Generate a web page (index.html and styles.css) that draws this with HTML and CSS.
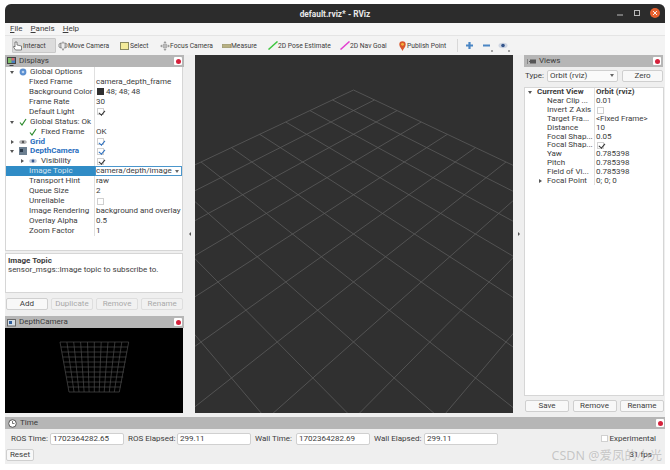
FILE: index.html
```html
<!DOCTYPE html>
<html lang="en">
<head>
<meta charset="utf-8">
<title>default.rviz* - RViz</title>
<link rel="stylesheet" href="styles.css">
</head>
<body>
<div class="window">
  <header class="titlebar">
    <span class="title">default.rviz* - RViz</span>
    <div class="wm">
      <svg width="8" height="8" viewBox="0 0 8 8"><path d="M1 6h6" stroke="#bbb"/></svg>
      <svg width="8" height="8" viewBox="0 0 8 8"><rect x="1.5" y="1.5" width="5" height="5" fill="none" stroke="#bbb"/></svg>
      <span class="close"><svg width="6" height="6" viewBox="0 0 6 6"><path d="M1 1l4 4M5 1l-4 4" stroke="#fff" stroke-width=".9"/></svg></span>
    </div>
  </header>
  <nav class="menubar"><span><u>F</u>ile</span><span><u>P</u>anels</span><span><u>H</u>elp</span></nav>
  <div class="toolbar">
    <div class="tool pressed"><svg width="10" height="10" viewBox="0 0 10 10"><path d="M2 1v5L1 5 .5 6l2 3h6V5L4 4V1z" fill="#fff" stroke="#555" stroke-width=".7"/></svg>Interact</div>
    <div class="tool w-move"><svg width="10" height="10" viewBox="0 0 10 10"><path d="M5 .5v9M1 3v3l2 1V2zM9 3v3L7 7V2z" fill="none" stroke="#777" stroke-width=".8"/><path d="M3 2h4v4l-2 3-2-3z" fill="#eee" stroke="#777" stroke-width=".6"/></svg>Move Camera</div>
    <div class="tool w-select"><svg width="9" height="8" viewBox="0 0 9 8"><rect x=".5" y=".5" width="8" height="7" fill="#f3eb9a" stroke="#8a8a60"/></svg>Select</div>
    <div class="tool w-focus"><svg width="10" height="10" viewBox="0 0 10 10"><path d="M5 0l1.5 2h-3zM5 10l1.500-2h-3zM0 5l2-1.500v3zM10 5l-2-1.500v3z" fill="#999"/><circle cx="5" cy="5" r="2.300" fill="#bbb" stroke="#888" stroke-width=".5"/></svg>Focus Camera</div>
    <div class="tool w-measure"><svg width="9" height="4" viewBox="0 0 9 4"><rect width="9" height="4" fill="#b8b184" stroke="#8a8a70" stroke-width=".6"/></svg>Measure</div>
    <div class="tool w-pose"><svg width="10" height="9" viewBox="0 0 10 9"><path d="M.5 8.500L9.500.5" stroke="#3fc63f" stroke-width="1.500"/></svg>2D Pose Estimate</div>
    <div class="tool w-nav"><svg width="10" height="9" viewBox="0 0 10 9"><path d="M.5 8.500L9.500.5" stroke="#e23fd0" stroke-width="1.500"/></svg>2D Nav Goal</div>
    <div class="tool w-point"><svg width="7" height="10" viewBox="0 0 7 10"><path d="M3.500 10C2.500 7.500.3 5.800.3 3.400a3.200 3.200 0 0 1 6.400 0C6.700 5.800 4.500 7.500 3.500 10z" fill="#d9562b"/><circle cx="3.500" cy="3.300" r="1.400" fill="#f4b23c"/></svg>Publish Point</div>
    <i class="sep"></i>
    <svg class="act" width="9" height="9" viewBox="0 0 9 9"><path d="M4.500 1v7M1 4.500h7" stroke="#4a86c4" stroke-width="2.200"/></svg>
    <svg class="act act-minus" width="11" height="11" viewBox="0 0 11 11"><path d="M1 4.500h7" stroke="#4a86c4" stroke-width="2"/><path d="M9 10h2" stroke="#555"/></svg>
    <svg class="act act-eye" width="12" height="11" viewBox="0 0 12 11"><ellipse cx="5" cy="4.500" rx="4.500" ry="2.800" fill="#cfd6e2"/><circle cx="5" cy="4.500" r="1.800" fill="#34558c"/><path d="M10 10h2" stroke="#555"/></svg>
  </div>

  <main class="workspace">
    <aside class="left">
      <section class="dock displays">
        <div class="dock-title"><svg width="9" height="9" viewBox="0 0 9 9"><rect x=".5" y=".5" width="8" height="6" fill="#4a7fc0" stroke="#444"/><rect x="1" y="1" width="3.500" height="5" fill="#7fc06a"/><rect x="4.500" y="1" width="3" height="2.500" fill="#d86a6a"/><path d="M2.500 8.500h4" stroke="#444"/></svg><span>Displays</span><b class="x"></b></div>
        <div class="tree">
          <div class="row"><div class="name d0"><i class="tw open"></i><svg class="ic" width="8" height="8" viewBox="0 0 8 8"><circle cx="4" cy="4" r="3.400" fill="#5b8fd0"/><circle cx="4" cy="4" r="1.300" fill="#bcd3ee"/></svg>Global Options</div><div class="val"></div></div>
          <div class="row"><div class="name d1">Fixed Frame</div><div class="val">camera_depth_frame</div></div>
          <div class="row"><div class="name d1">Background Color</div><div class="val"><i class="swatch"></i>48; 48; 48</div></div>
          <div class="row"><div class="name d1">Frame Rate</div><div class="val">30</div></div>
          <div class="row"><div class="name d1">Default Light</div><div class="val"><i class="cb on"></i></div></div>
          <div class="row"><div class="name d0"><i class="tw open"></i><svg class="ic" width="8" height="8" viewBox="0 0 8 8"><path d="M1 4.500L3 7l4-6" fill="none" stroke="#2d8a2d" stroke-width="1.200"/></svg>Global Status: Ok</div><div class="val"></div></div>
          <div class="row"><div class="name d1b"><svg class="ic" width="8" height="8" viewBox="0 0 8 8"><path d="M1 4.500L3 7l4-6" fill="none" stroke="#2d8a2d" stroke-width="1.200"/></svg>Fixed Frame</div><div class="val">OK</div></div>
          <div class="row"><div class="name d0 link"><i class="tw"></i><svg class="ic" width="8" height="8" viewBox="0 0 8 8"><ellipse cx="4" cy="4" rx="3.800" ry="2" fill="#b5b5b5"/><circle cx="4" cy="4" r="1.200" fill="#555"/></svg>Grid</div><div class="val"><i class="cb on blue"></i></div></div>
          <div class="row"><div class="name d0 link"><i class="tw open"></i><svg class="ic" width="8" height="8" viewBox="0 0 8 8"><rect width="8" height="8" fill="#6c7f90"/><rect x="1" y="2" width="3" height="3" fill="#2b3a4a"/></svg>DepthCamera</div><div class="val"><i class="cb on blue"></i></div></div>
          <div class="row"><div class="name d1c"><i class="tw"></i><svg class="ic" width="8" height="8" viewBox="0 0 8 8"><ellipse cx="4" cy="4" rx="3.800" ry="2.200" fill="#c5cede"/><circle cx="4" cy="4" r="1.400" fill="#34558c"/></svg>Visibility</div><div class="val"><i class="cb on"></i></div></div>
          <div class="row sel"><div class="name d1">Image Topic</div><div class="val combo">camera/depth/image<i class="arrow boxed"></i></div></div>
          <div class="row"><div class="name d1">Transport Hint</div><div class="val">raw</div></div>
          <div class="row"><div class="name d1">Queue Size</div><div class="val">2</div></div>
          <div class="row"><div class="name d1">Unreliable</div><div class="val"><i class="cb"></i></div></div>
          <div class="row"><div class="name d1">Image Rendering</div><div class="val">background and overlay</div></div>
          <div class="row"><div class="name d1">Overlay Alpha</div><div class="val">0.5</div></div>
          <div class="row"><div class="name d1">Zoom Factor</div><div class="val">1</div></div>
        </div>
        <div class="desc"><strong>Image Topic</strong><br>sensor_msgs::Image topic to subscribe to.</div>
        <div class="btns"><button>Add</button><button disabled>Duplicate</button><button disabled>Remove</button><button disabled>Rename</button></div>
      </section>
      <section class="dock camera">
        <div class="dock-title"><svg width="9" height="9" viewBox="0 0 9 9"><rect x=".5" y="1.500" width="8" height="6.500" fill="#d5dde5" stroke="#666"/><rect x="2" y="3" width="3" height="3" fill="#2f5d9a"/></svg><span>DepthCamera</span><b class="x"></b></div>
        <div class="cam-view">
          <svg width="178" height="86" viewBox="5 327 178 86">
            <g stroke="#4c4c4c" stroke-width=".7" fill="none">
              <path d="M60 341H128.700M60.900 346H127.900M61.800 351H127.200M62.700 356H126.400M63.600 361H125.700M64.500 366H124.800M65.400 371H124M66.300 376H123.200M67.200 381H122.100M68.100 386H120.700M69 391H119.300"/>
              <path d="M60 341L69 391M66.900 341L74 391M73.700 341L79 391M80.600 341L84.100 391M87.500 341L89.100 391M94.300 341V391M101.200 341L99.200 391M108 341L104.200 391M114.900 341L109.300 391M121.800 341L114.300 391M128.700 341L119.300 391"/>
            </g>
          </svg>
        </div>
      </section>
    </aside>
    <div class="handle"><i class="tri-l"></i></div>
    <section class="viewport">
      <svg width="318" height="358" viewBox="195 55 318 358">
        <g stroke="#5c5c5c" stroke-width=".8" fill="none">
          <path d="M353.500 90L48.500 234M374.530 99.930L64.600 256.700M397.060 110.570L82.430 282M421.270 122L102.400 310.200M447.330 134.310L124.800 342M475.480 147.600L150.200 378M505.980 162L179.240 419.140M539.100 177.650L212.750 466.600M575.300 194.700L251.850 522M614.900 213.400L298.050 587.500M658.450 234L353.500 666"/>
          <path d="M353.500 90L658.500 234M332.470 99.930L642.400 256.700M309.940 110.570L624.570 282M285.730 122L604.600 310.200M259.670 134.310L582.200 342M231.520 147.600L556.800 378M201.020 162L527.760 419.140M167.900 177.650L494.250 466.600M131.700 194.700L455.150 522M92.100 213.400L408.950 587.500M48.550 234L353.500 666"/>
        </g>
      </svg>
    </section>
    <div class="handle"><i class="tri-r"></i></div>
    <aside class="dock views">
      <div class="dock-title"><svg width="9" height="5" viewBox="0 0 9 5"><path d="M0 0v5M2 2.500h1" stroke="#555"/><rect x="3" y=".5" width="6" height="4" fill="#555"/></svg><span>Views</span><b class="x"></b></div>
      <div class="type-row"><span>Type:</span><div class="select">Orbit (rviz)<i class="arrow"></i></div><button>Zero</button></div>
      <div class="tree vtree">
        <div class="row"><div class="name v0 strong"><i class="tw open"></i>Current View</div><div class="val strong">Orbit (rviz)</div></div>
        <div class="row"><div class="name v1">Near Clip ...</div><div class="val">0.01</div></div>
        <div class="row"><div class="name v1">Invert Z Axis</div><div class="val"><i class="cb"></i></div></div>
        <div class="row"><div class="name v1">Target Fra...</div><div class="val">&lt;Fixed Frame&gt;</div></div>
        <div class="row"><div class="name v1">Distance</div><div class="val">10</div></div>
        <div class="row"><div class="name v1">Focal Shap...</div><div class="val">0.05</div></div>
        <div class="row"><div class="name v1">Focal Shap...</div><div class="val"><i class="cb on"></i></div></div>
        <div class="row"><div class="name v1">Yaw</div><div class="val">0.785398</div></div>
        <div class="row"><div class="name v1">Pitch</div><div class="val">0.785398</div></div>
        <div class="row"><div class="name v1">Field of Vi...</div><div class="val">0.785398</div></div>
        <div class="row"><div class="name v2"><i class="tw"></i>Focal Point</div><div class="val">0; 0; 0</div></div>
      </div>
      <div class="btns view-btns"><button>Save</button><button>Remove</button><button>Rename</button></div>
    </aside>
  </main>

  <section class="time">
    <div class="dock-title"><svg width="9" height="9" viewBox="0 0 9 9"><circle cx="4.500" cy="4.500" r="3.800" fill="#fff" stroke="#555"/><path d="M4.500 2v2.500h2" fill="none" stroke="#555" stroke-width=".8"/></svg><span>Time</span><b class="x"></b></div>
    <div class="time-row">
      <label class="l1">ROS Time:</label><div class="field">1702364282.65</div>
      <label class="l2">ROS Elapsed:</label><div class="field">299.11</div>
      <label class="l3">Wall Time:</label><div class="field">1702364282.69</div>
      <label class="l4">Wall Elapsed:</label><div class="field">299.11</div>
      <div class="exp"><i class="cb"></i>Experimental</div>
    </div>
    <div class="status-row"><button>Reset</button><span class="fps">31 fps</span></div>
  </section>
</div>
<div class="watermark">CSDN @爱凤的小光</div>
</body>
</html>
```
FILE: styles.css
```css
* { box-sizing: border-box; }
html, body { margin: 0; height: 100%; background: #fff; overflow: hidden; }
body { position: relative; font: 8px/10px Roboto, "Noto Sans", sans-serif; color: #3c3c3c; }
.window { margin: 4px 5px 0; width: 660px; height: 460px; display: flex; flex-direction: column; background: #efefef; border-radius: 6px 6px 0 0; overflow: hidden; }

.titlebar { height: 19px; flex: none; background: #2c2c2c; display: flex; align-items: center; justify-content: center; position: relative; }
.title { color: #e8e8e8; font-weight: 700; font-size: 8.300px; }
.wm { position: absolute; right: 5px; top: 4px; display: flex; align-items: center; gap: 9px; }
.close { width: 10px; height: 10px; border-radius: 50%; background: #e9622f; display: flex; align-items: center; justify-content: center; }

.menubar { height: 12px; flex: none; background: #f6f6f6; display: flex; gap: 8px; padding-left: 5px; align-items: center; font-size: 8px; }
.toolbar { height: 20px; flex: none; background: #f3f3f3; border-top: 1px solid #e4e4e4; display: flex; align-items: center; padding-left: 7px; font-size: 6.700px; }
.tool { display: flex; align-items: center; height: 15px; white-space: nowrap; flex: none; }
.tool svg { flex: none; }
.pressed { width: 44px; background: #dcdcdc; border: 1px solid #c8c8c8; border-radius: 1px; }
.w-move { margin-left: 2px; width: 62px; }
.w-select { width: 40px; gap: 1px; }
.w-focus { width: 62px; }
.w-measure { width: 46px; }
.w-pose { width: 72px; }
.w-nav { width: 59px; }
.w-point { width: 58px; gap: 1px; }
.sep { width: 1px; height: 13px; background: #d8d8d8; flex: none; }
.act { flex: none; margin-left: 7px; }
.act-minus { margin-left: 8px; margin-top: 2px; }
.act-eye { margin-left: 5px; margin-top: 2px; }

.workspace { flex: 1; min-height: 0; display: flex; }
.left { width: 179px; flex: none; height: 358px; display: flex; flex-direction: column; gap: 6px; }
.dock { display: flex; flex-direction: column; min-height: 0; }
.dock-title { height: 12px; flex: none; background: #b6b6b6; display: flex; align-items: center; gap: 3px; padding-left: 2px; font-size: 8px; }
.dock-title span { flex: 1; }
.x { width: 8px; height: 8px; background: #fff; margin-right: 2px; position: relative; flex: none; border-radius: 1px; }
.x::after { content: ""; position: absolute; left: 1.500px; top: 1.500px; width: 5px; height: 5px; border-radius: 50%; background: #d5223c; }

.displays { height: 255px; flex: none; }
.tree { background: #fff; border: 1px solid #d6d6d6; border-top: 0; height: 184px; flex: none; overflow: hidden; width: 178px; }
.row { height: 9.940px; display: flex; align-items: center; white-space: nowrap; }
.name { width: 89px; flex: none; height: 100%; display: flex; align-items: center; border-right: 1px solid #e0e0e0; overflow: hidden; }
.val { flex: 1; min-width: 0; padding-left: 1px; display: flex; align-items: center; height: 100%; }
.d0 { padding-left: 3px; }
.d1 { padding-left: 23px; }
.d1b { padding-left: 23px; }
.d1c { padding-left: 13px; }
.link { color: #2a6fc0; font-weight: 700; }
.tw { width: 10px; height: 8px; flex: none; position: relative; }
.tw::after { content: ""; position: absolute; left: 2px; top: 2px; border-left: 3px solid #555; border-top: 2px solid transparent; border-bottom: 2px solid transparent; }
.tw.open::after { left: 1px; top: 3px; border-top: 3px solid #555; border-left: 2px solid transparent; border-right: 2px solid transparent; border-bottom: 0; }
.ic { margin-right: 4px; flex: none; }
.name.d0 .ic { margin-left: 0; margin-right: 3px; }
.cb { width: 7px; height: 7px; background: #fff; border: 1px solid #d0d0d0; display: block; position: relative; flex: none; margin-left: 1px; }
.cb.on::after { content: ""; position: absolute; left: 1.500px; top: -.5px; width: 2.500px; height: 5px; border: solid #333; border-width: 0 1px 1px 0; transform: rotate(40deg); }
.cb.blue::after { border-color: #2a6fc0; }
.swatch { width: 7px; height: 7px; background: #303030; margin: 0 2px 0 1px; flex: none; }
.sel { background: #308cc6; }
.sel .name { border-right: 0; color: #d5e3ee; }
.combo { background: #fff; border: 1px solid #4a96cc; justify-content: space-between; padding: 0; }
.arrow { width: 0; height: 0; border-top: 3px solid #666; border-left: 2px solid transparent; border-right: 2px solid transparent; margin-right: 3px; flex: none; }
.arrow.boxed { margin-right: 2px; }

.desc { height: 40px; flex: none; margin-top: 2px; background: #fff; border: 1px solid #d6d6d6; padding: 2px 2px; line-height: 9px; width: 178px; }
.btns { display: flex; gap: 3.500px; padding: 5px 0 0 1px; height: 17px; flex: none; width: 178px; }
button { font: inherit; color: inherit; height: 12px; padding: 0; background: #f8f8f8; border: 1px solid #cfcfcf; border-radius: 2px; flex: 1; }
button:disabled { color: #a9a9a9; background: #f1f1f1; border-color: #dedede; }

.camera { flex: 1; }
.cam-view { flex: 1; background: #000; min-height: 0; overflow: hidden; width: 178px; }
.cam-view svg { display: block; }

.handle { flex: none; width: 11px; height: 358px; display: flex; align-items: center; justify-content: center; }
.tri-l { border-right: 2px solid #555; border-top: 2px solid transparent; border-bottom: 2px solid transparent; }
.tri-r { border-left: 2px solid #555; border-top: 2px solid transparent; border-bottom: 2px solid transparent; }
.viewport { width: 318px; flex: none; height: 358px; background: #303030; }
.viewport svg { display: block; }

.views { width: 140px; flex: none; height: 358px; }
.views .dock-title { width: 139px; padding-left: 3px; }
.type-row { height: 20px; flex: none; display: flex; align-items: center; padding: 0 0 3px 1px; }
.type-row span { width: 22px; }
.select { width: 71px; height: 12px; background: #fafafa; border: 1px solid #cfcfcf; border-radius: 2px; display: flex; align-items: center; justify-content: space-between; padding-left: 2px; }
.type-row button { flex: none; width: 41px; height: 12px; margin-left: 4px; }
.tree.vtree { height: 309px; width: 140px; border-top: 1px solid #d6d6d6; }
.vtree .row { height: 8.850px; }
.vtree .name { width: 70px; }
.v0 { padding-left: 2px; }
.v1 { padding-left: 22px; }
.v2 { padding-left: 12px; }
.strong { font-weight: 700; }
.view-btns { padding: 4px 0 0 1px; height: 17px; gap: 3.500px; width: 140px; }

.time { height: 47px; flex: none; margin-top: 3px; display: flex; flex-direction: column; }
.time .dock-title { padding-left: 3px; }
.time .x { margin-right: 1px; }
.time-row { height: 20px; flex: none; display: flex; align-items: center; padding: 0 0 1px 6px; }
.time-row label { flex: none; }
.l1 { width: 39px; }
.l2 { width: 49px; }
.l3 { width: 41px; }
.l4 { width: 50px; }
.field { width: 74px; height: 12px; background: #fff; border: 1px solid #d0d0d0; border-radius: 2px; display: flex; align-items: center; padding-left: 2px; margin-right: 4px; flex: none; }
.exp { margin-left: auto; display: flex; align-items: center; gap: 2px; margin-right: 9px; }
.status-row { display: flex; align-items: center; justify-content: space-between; padding: 0 13px 0 1px; }
.status-row button { flex: none; width: 28px; height: 12px; }
.watermark { position: absolute; right: 8px; top: 449px; color: rgba(140,140,140,.42); font: 12.500px/14px "Noto Sans", "Noto Sans CJK SC", sans-serif; pointer-events: none; }
```
